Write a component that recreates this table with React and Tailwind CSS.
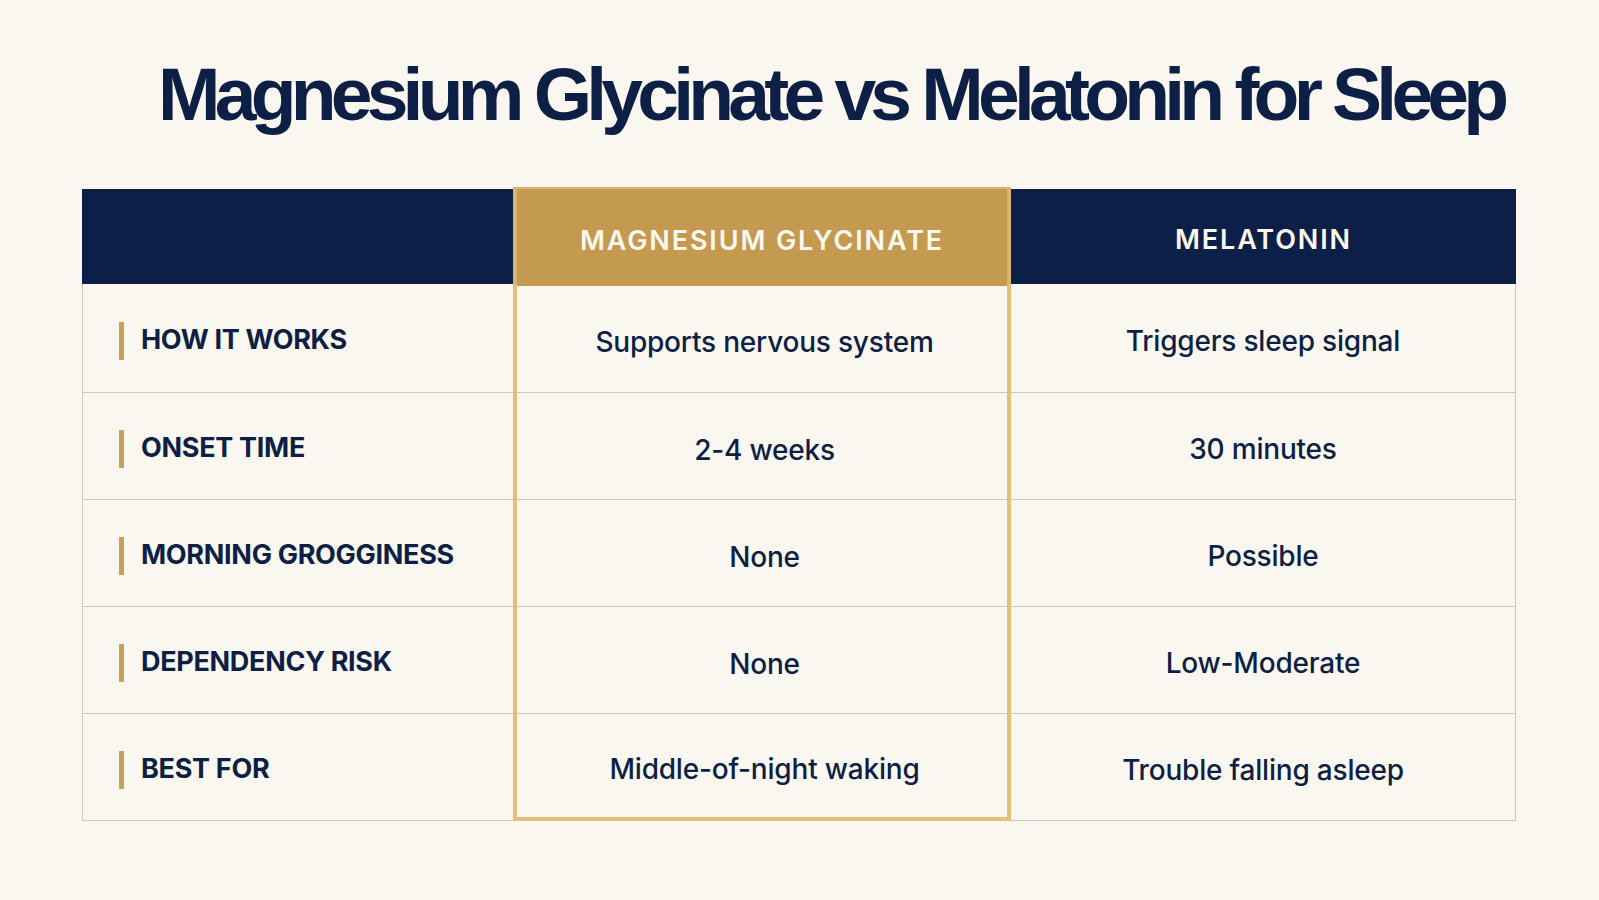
import React from 'react'

const rows = [
  { label: 'HOW IT WORKS', mg: 'Supports nervous system', mel: 'Triggers sleep signal', h: 'h-[109px]' },
  { label: 'ONSET TIME', mg: '2-4 weeks', mel: '30 minutes', h: 'h-[107px]' },
  { label: 'MORNING GROGGINESS', mg: 'None', mel: 'Possible', h: 'h-[107px]' },
  { label: 'DEPENDENCY RISK', mg: 'None', mel: 'Low-Moderate', h: 'h-[107px]' },
  { label: 'BEST FOR', mg: 'Middle-of-night waking', mel: 'Trouble falling asleep', h: 'h-[107px]' },
]

export default function App(){
  return (
    <div className="min-h-[900px] w-full bg-[#faf7f0] text-[#0d1f45]" style={{ fontFamily: 'Inter, "Noto Sans", sans-serif' }}>
      <div className="pt-[57px] pl-[158px]">
        <h1 className="h-[75px] text-[75px] leading-none font-bold tracking-[-0.077em] whitespace-nowrap" style={{ fontFamily: '"Liberation Sans", Arial, sans-serif' }}>
          Magnesium Glycinate vs Melatonin for Sleep
        </h1>
      </div>

      <div className="ml-[82px] mt-[57px] w-[1434px]">
        {/* header */}
        <div className="grid grid-cols-[431px_498px_505px] h-[95px] bg-[#0c1f48]">
          <div />
          <div className="-my-[2px] bg-[#c49a50] border-x-4 border-t-2 border-[#d9b36a] flex items-center justify-center pt-[8px]">
            <span className="text-[27px] font-semibold tracking-[0.07em] text-[#fbf7ee]">MAGNESIUM GLYCINATE</span>
          </div>
          <div className="flex items-center justify-center pt-[8px]">
            <span className="text-[27px] font-semibold tracking-[0.07em] text-[#fbf7ee]">MELATONIN</span>
          </div>
        </div>

        {rows.map((r, i)=> (
          <div key={r.label} className={`grid grid-cols-[431px_498px_505px] ${r.h}`}>
            <div className="border-l border-b border-[#cbc8c1] flex items-center pl-[36px] gap-[17px] pt-[5px]">
              <span className="w-[5px] h-[38px] bg-[#c9a055]" />
              <span className="text-[27px] font-bold tracking-[-0.3px]">{r.label}</span>
            </div>
            <div className={`relative border-x-4 border-[#e3c07a] flex items-center justify-center pt-[6px] pl-[5px] ${i===rows.length-1 ? 'border-b-4' : ''}`}>
              {i!==rows.length-1 && <span className="absolute left-0 right-0 bottom-0 h-px bg-[#cbc8c1]" />}
              <span className="text-[28px] font-medium tracking-[-0.2px]">{r.mg}</span>
            </div>
            <div className="border-r border-b border-[#cbc8c1] flex items-center justify-center pt-[6px]">
              <span className="text-[28px] font-medium tracking-[-0.2px]">{r.mel}</span>
            </div>
          </div>
        ))}
      </div>
    </div>
  )
}
